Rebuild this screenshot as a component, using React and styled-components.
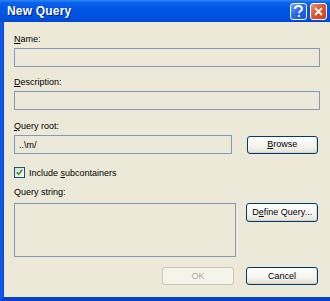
import React from 'react';
import styled, { createGlobalStyle } from 'styled-components';

const GlobalStyle = createGlobalStyle`
  html, body {
    margin: 0;
    padding: 0;
    background: #ece9d8;
  }
  body {
    font-family: "Liberation Sans", Arial, sans-serif;
  }
`;

const Window = styled.div`
  width: 330px;
  height: 301px;
  display: flex;
  flex-direction: column;
  overflow: hidden;
  background: #0054e3;
`;

const TitleBar = styled.div`
  height: 22px;
  flex: none;
  display: flex;
  align-items: center;
  padding: 0 3px 0 7px;
  background: linear-gradient(
    to bottom,
    #2f86f8 0%,
    #0a62ea 12%,
    #0055e5 45%,
    #0052e0 80%,
    #0046d2 100%
  );
`;

const Title = styled.span`
  flex: 1;
  color: #fff;
  font-weight: bold;
  font-size: 12px;
  letter-spacing: 0.2px;
  text-shadow: 1px 1px 0 #0a1f80;
`;

const CaptionButton = styled.button`
  width: 17px;
  height: 17px;
  margin-left: 3px;
  padding: 0;
  border: 1px solid #fff;
  border-radius: 3px;
  display: flex;
  align-items: center;
  justify-content: center;
  background: ${(p) =>
    p.$close
      ? 'linear-gradient(135deg, #f0937a 0%, #e0552f 45%, #c8401c 100%)'
      : 'linear-gradient(135deg, #6ea6ff 0%, #2a6cf0 45%, #1450d8 100%)'};
`;

const Frame = styled.div`
  flex: 1;
  display: flex;
  flex-direction: column;
  border-left: 3px solid #0a5ae8;
  border-bottom: 4px solid #0840c8;
  box-shadow: inset 1px 0 0 #1f3fbf;
  background: #ece9d8;
`;

const Content = styled.div`
  flex: 1;
  display: flex;
  flex-direction: column;
  padding: 12px 10px 0 11px;
  font-size: 9px;
  color: #000;
`;

const Field = styled.div`
  display: flex;
  flex-direction: column;
  margin-top: ${(p) => p.$top || 0}px;
`;

const Label = styled.div`
  height: 11px;
  line-height: 11px;
  margin-bottom: ${(p) => p.$gap || 3}px;
  white-space: nowrap;
`;

const Key = styled.span`
  text-decoration: underline;
`;

const TextBox = styled.div`
  height: 19px;
  box-sizing: border-box;
  border: 1px solid #7f9db9;
  display: flex;
  align-items: center;
  padding: 0 4px;
  width: ${(p) => (p.$width ? `${p.$width}px` : 'auto')};
`;

const TextArea = styled.div`
  width: 224px;
  height: 54px;
  box-sizing: border-box;
  border: 1px solid #7f9db9;
`;

const Row = styled.div`
  display: flex;
  align-items: ${(p) => p.$align || 'center'};
  gap: ${(p) => p.$gap || 15}px;
  justify-content: ${(p) => p.$justify || 'flex-start'};
`;

const Button = styled.button`
  width: 72px;
  height: ${(p) => p.$h || 18}px;
  padding: 0;
  box-sizing: border-box;
  border: 1px solid ${(p) => (p.disabled ? '#c9c7ba' : '#003c74')};
  border-radius: 3px;
  background: ${(p) =>
    p.disabled
      ? '#f5f4ea'
      : 'linear-gradient(to bottom, #ffffff 0%, #f4f3ee 60%, #e3e1d6 100%)'};
  box-shadow: ${(p) =>
    p.disabled ? 'none' : 'inset 0 -1px 0 #d6d0c5, inset -1px 0 0 #e0dcd2'};
  color: ${(p) => (p.disabled ? '#aca899' : '#000')};
  font-family: "Liberation Sans", Arial, sans-serif;
  font-size: 9px;
  line-height: 1;
  margin-right: 2px;
`;

const Check = styled.span`
  width: 11px;
  height: 11px;
  box-sizing: border-box;
  border: 1px solid #1c5180;
  background: linear-gradient(135deg, #dcdbd5 0%, #f6f6f4 80%, #fff 100%);
  display: flex;
  align-items: center;
  justify-content: center;
`;

const CheckRow = styled.label`
  display: flex;
  align-items: center;
  gap: 4px;
  margin-top: 13px;
  height: 11px;
  white-space: nowrap;
`;

const Footer = styled.div`
  display: flex;
  justify-content: flex-end;
  gap: 10px;
  margin-top: 10px;
`;

export default function App() {
  return (
    <>
      <GlobalStyle />
      <Window>
        <TitleBar>
          <Title>New Query</Title>
          <CaptionButton aria-label="Help">
            <svg width="11" height="13" viewBox="0 0 11 13">
              <path
                d="M2 4 C2 1.5 3.5 1 5.5 1 C7.5 1 9 2 9 4 C9 6 6 6 6 8.2"
                fill="none"
                stroke="#fff"
                strokeWidth="2"
              />
              <rect x="5" y="10" width="2" height="2" fill="#fff" />
            </svg>
          </CaptionButton>
          <CaptionButton $close aria-label="Close">
            <svg width="11" height="11" viewBox="0 0 11 11">
              <path d="M2 2 L9 9 M9 2 L2 9" stroke="#fff" strokeWidth="1.8" />
            </svg>
          </CaptionButton>
        </TitleBar>
        <Frame>
          <Content>
            <Field>
              <Label>
                <Key>N</Key>ame:
              </Label>
              <TextBox />
            </Field>
            <Field $top={10}>
              <Label>
                <Key>D</Key>escription:
              </Label>
              <TextBox />
            </Field>
            <Field $top={11}>
              <Label>
                <Key>Q</Key>uery root:
              </Label>
              <Row>
                <TextBox $width={219}>..\m/</TextBox>
                <Button>
                  <Key>B</Key>rowse
                </Button>
              </Row>
            </Field>
            <CheckRow>
              <Check>
                <svg width="7" height="7" viewBox="0 0 7 7">
                  <path
                    d="M0.8 3.2 L2.6 5.2 L6.2 0.8"
                    fill="none"
                    stroke="#21a121"
                    strokeWidth="1.6"
                  />
                </svg>
              </Check>
              <span>
                Include <Key>s</Key>ubcontainers
              </span>
            </CheckRow>
            <Field $top={9}>
              <Label $gap={5}>Query string:</Label>
              <Row $align="flex-start" $gap={10}>
                <TextArea />
                <Button $h={19}>
                  D<Key>e</Key>fine Query...
                </Button>
              </Row>
            </Field>
            <Footer>
              <Button disabled>OK</Button>
              <Button>Cancel</Button>
            </Footer>
          </Content>
        </Frame>
      </Window>
    </>
  );
}
